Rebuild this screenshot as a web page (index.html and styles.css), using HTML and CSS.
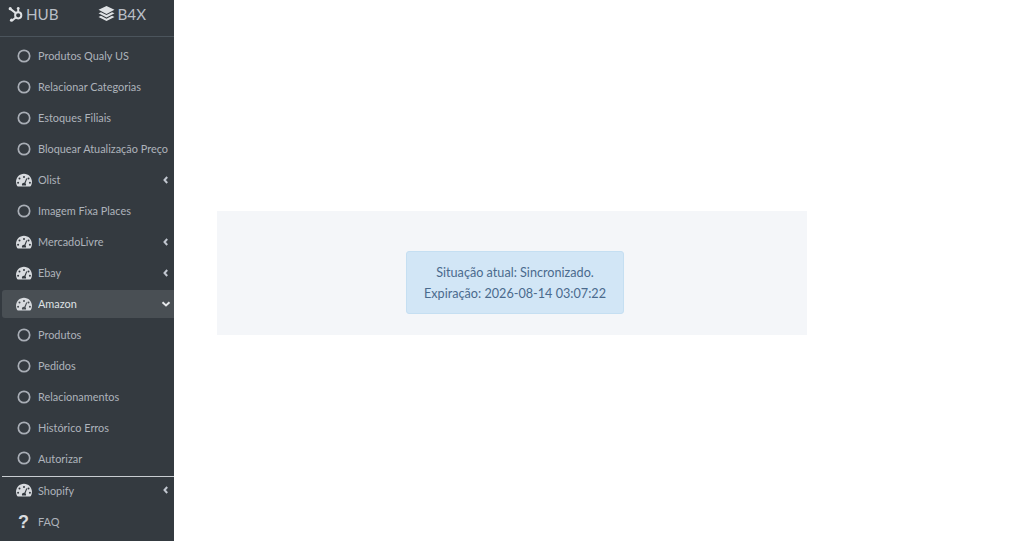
FILE: index.html
```html
<!DOCTYPE html>
<html lang="pt-BR">
<head>
<meta charset="utf-8">
<title>HUB B4X</title>
<link rel="stylesheet" href="styles.css">
</head>
<body>
<svg class="defs" width="0" height="0" aria-hidden="true">
  <symbol id="ring" viewBox="0 0 14 14"><circle cx="7" cy="7" r="5.700" fill="none" stroke="currentColor" stroke-width="1.700"/></symbol>
  <symbol id="gauge" viewBox="0 0 16 14"><path fill="currentColor" fill-rule="evenodd" d="M8 .8C3.600.8 0 4.400 0 8.800c0 1.600.4 2.900 1.100 4.100.2.300.5.500.9.500h12c.4 0 .7-.2.900-.5.700-1.200 1.100-2.500 1.100-4.100 0-4.400-3.600-8-8-8zM8 3a1 1 0 1 1 0 2 1 1 0 0 1 0-2zM3.500 4.600a1 1 0 1 1 0 2 1 1 0 0 1 0-2zM2.100 8.800a1 1 0 1 1 0 2 1 1 0 0 1 0-2zM13.900 8.800a1 1 0 1 1 0 2 1 1 0 0 1 0-2zM12.500 4.600a1 1 0 1 1 0 2 1 1 0 0 1 0-2zM10.300 5.300l.9.400-1.700 4.600c.4.400.6.900.6 1.400 0 .3-.1.500-.2.700H6.100c-.1-.2-.2-.4-.2-.7 0-1.100.9-2 2-2h.5z"/></symbol>
  <symbol id="left" viewBox="0 0 8 10"><path d="M5.200 2 2.500 5l2.700 3" fill="none" stroke="currentColor" stroke-width="2"/></symbol>
  <symbol id="down" viewBox="0 0 10 8"><path d="M1.500 2.200 5 5.400 8.500 2.200" fill="none" stroke="currentColor" stroke-width="2"/></symbol>
</svg>
<div class="page">
  <aside class="sidebar">
    <header class="brand">
      <span class="brand-item">
        <svg class="hub-logo" viewBox="0 0 18 18" aria-hidden="true"><g fill="none" stroke="currentColor" stroke-width="2.200"><circle cx="11.500" cy="10.500" r="3.500"/><path d="M11.500 3v4M8.800 8 3 3.500M8.800 13 5 16"/></g><circle cx="2.500" cy="3" r="1.800" fill="currentColor"/><circle cx="4" cy="16" r="1.800" fill="currentColor"/><circle cx="11.500" cy="2.500" r="1.500" fill="currentColor"/></svg>
        HUB
      </span>
      <span class="brand-item">
        <svg class="b4x-logo" viewBox="0 0 16 15" aria-hidden="true"><path fill="currentColor" d="M8 0 .5 3.500 8 7.400l7.500-3.900zM2.800 5.800.5 6.900 8 10.800l7.500-3.900-2.300-1.100L8 8.500zM2.800 9.200l-2.300 1.100L8 14.200l7.500-3.900-2.300-1.100L8 11.900z"/></svg>
        B4X
      </span>
    </header>
    <nav class="menu">
      <a class="item"><svg class="ico ring"><use href="#ring"/></svg><span class="label">Produtos Qualy US</span></a>
      <a class="item"><svg class="ico ring"><use href="#ring"/></svg><span class="label">Relacionar Categorias</span></a>
      <a class="item"><svg class="ico ring"><use href="#ring"/></svg><span class="label">Estoques Filiais</span></a>
      <a class="item"><svg class="ico ring"><use href="#ring"/></svg><span class="label">Bloquear Atualização Preço</span></a>
      <a class="item"><svg class="ico gauge"><use href="#gauge"/></svg><span class="label">Olist</span><svg class="arrow"><use href="#left"/></svg></a>
      <a class="item"><svg class="ico ring"><use href="#ring"/></svg><span class="label">Imagem Fixa Places</span></a>
      <a class="item"><svg class="ico gauge"><use href="#gauge"/></svg><span class="label">MercadoLivre</span><svg class="arrow"><use href="#left"/></svg></a>
      <a class="item"><svg class="ico gauge"><use href="#gauge"/></svg><span class="label">Ebay</span><svg class="arrow"><use href="#left"/></svg></a>
      <a class="item active"><svg class="ico gauge"><use href="#gauge"/></svg><span class="label">Amazon</span><svg class="arrow"><use href="#down"/></svg></a>
      <a class="item"><svg class="ico ring"><use href="#ring"/></svg><span class="label">Produtos</span></a>
      <a class="item"><svg class="ico ring"><use href="#ring"/></svg><span class="label">Pedidos</span></a>
      <a class="item"><svg class="ico ring"><use href="#ring"/></svg><span class="label">Relacionamentos</span></a>
      <a class="item"><svg class="ico ring"><use href="#ring"/></svg><span class="label">Histórico Erros</span></a>
      <a class="item last"><svg class="ico ring"><use href="#ring"/></svg><span class="label">Autorizar</span></a>
      <a class="item after-rule"><svg class="ico gauge"><use href="#gauge"/></svg><span class="label">Shopify</span><svg class="arrow"><use href="#left"/></svg></a>
      <a class="item"><span class="ico qmark">?</span><span class="label">FAQ</span></a>
    </nav>
  </aside>
  <main class="main">
    <section class="panel">
      <div class="alert">
        <p>Situação atual: Sincronizado.</p>
        <p>Expiração: 2026-08-14 03:07:22</p>
      </div>
    </section>
  </main>
</div>
</body>
</html>
```
FILE: styles.css
```css
* { box-sizing: border-box; }
html, body { margin: 0; height: 100%; background: #fff; overflow: hidden; }
body { font-family: "Lato", "Noto Sans", sans-serif; }
.defs { display: block; height: 0; }
.page { display: flex; height: 541px; }
.sidebar { width: 174px; flex: none; background: #343a40; display: flex; flex-direction: column; color: #c2c7d0; }
.brand { height: 37px; flex: none; display: flex; align-items: center; padding: 0 28px 8px 8px; justify-content: space-between; border-bottom: 1px solid #4b545c; font-size: 15.200px; color: #b9bec6; }
.brand-item { display: flex; align-items: center; gap: 2px; }
.hub-logo { width: 16px; height: 16px; color: #dfe2e5; }
.b4x-logo { width: 17px; height: 16px; margin-right: 1px; color: #dfe2e5; }
.menu { display: flex; flex-direction: column; padding-top: 3px; }
.item { height: 31px; display: flex; align-items: center; padding-left: 14.500px; margin-left: 2px; font-size: 10.900px; color: #aeb3bb; white-space: nowrap; padding-right: 4px; }
.item.active { height: 28px; margin-top: 1.500px; margin-bottom: 1.500px; background: #494f54; border-radius: 3px 0 0 3px; color: #dfe2e5; }
.item.last { height: 34px; border-bottom: 1px solid #c9cdd2; padding-bottom: 3px; }
.item.after-rule { height: 26px; margin-bottom: 3px; }
.ico { flex: none; display: block; }
.ring { width: 14px; height: 14px; margin-right: 7.500px; color: #a9aeb6; }
.gauge { width: 16px; height: 14px; margin-left: -.5px; margin-right: 6px; color: #d8dbdf; }
.qmark { width: 14px; margin-right: 7.500px; font: 700 18px/1 "Liberation Sans", sans-serif; text-align: center; color: #d8dbdf; }
.label { flex: 1; min-width: 0; overflow: hidden; }
.arrow { width: 8px; height: 10px; flex: none; color: #c2c7d0; }
.active .arrow { width: 10px; height: 8px; margin-right: -1px; color: #e6e8eb; }
.main { flex: 1; display: flex; align-items: flex-start; padding: 211px 0 0 43px; }
.panel { width: 590px; height: 124px; background: #f4f6f9; display: flex; justify-content: center; padding: 40px 0 0 6px; }
.alert { width: 218px; height: 63px; background: #d2e6f6; border: 1px solid #c5dff2; border-radius: 3px; color: #4a6a8d; font-size: 12.650px; text-align: center; display: flex; flex-direction: column; justify-content: center; gap: 3px; padding-top: 2px; }
.alert p { margin: 0; line-height: 18px; }
```
